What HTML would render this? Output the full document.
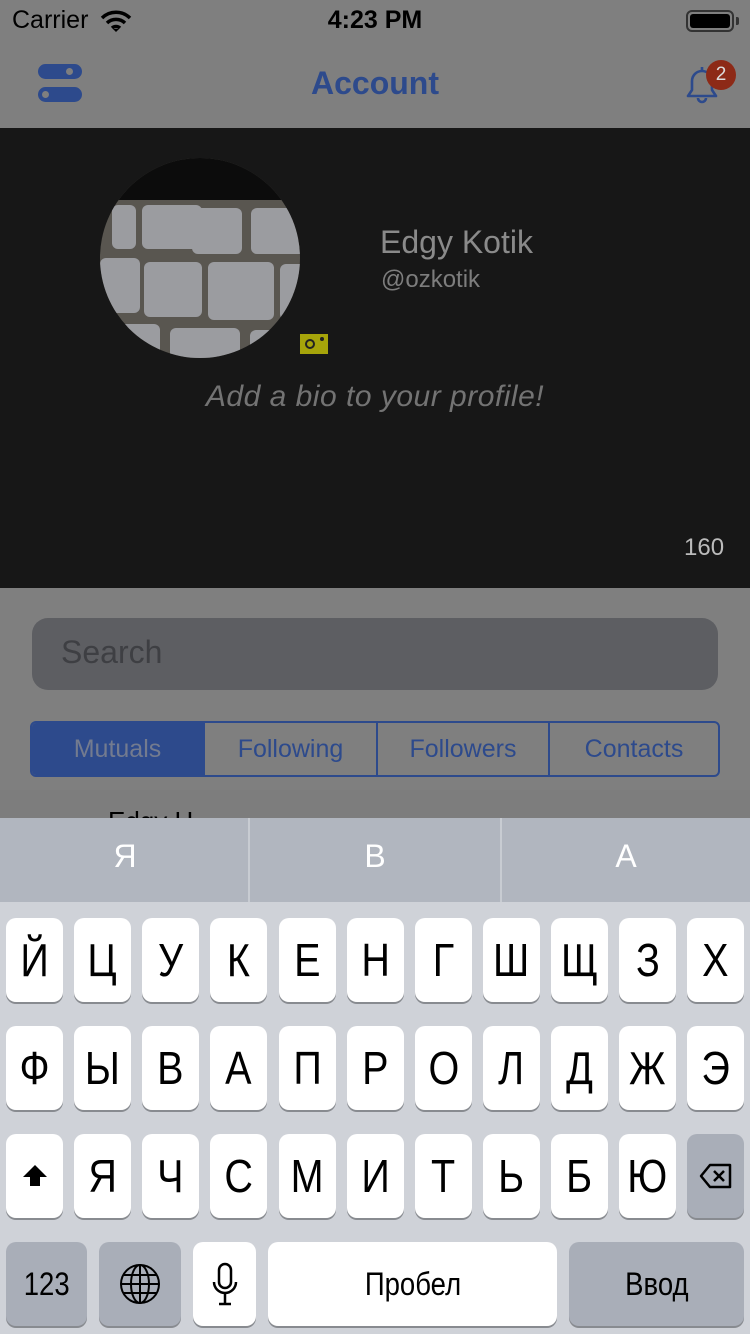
<!DOCTYPE html>
<html><head><meta charset="utf-8"><style>
*{margin:0;padding:0;box-sizing:border-box}
body{width:750px;height:1334px;overflow:hidden;background:#7f7f7f;font-family:"Liberation Sans","DejaVu Sans",sans-serif;position:relative}
.a{position:absolute}
.k{position:absolute;width:57px;height:84px;background:#fff;border-radius:10px;box-shadow:0 2px 0 #888b90;font-size:46px;color:#000;display:flex;align-items:center;justify-content:center}
.k span{display:inline-block;transform:scaleX(0.86)}
.g{background:#a9aeb8}
</style></head><body>
<div class="a" style="left:12px;top:6px;font-size:25px;color:#000">Carrier</div>
<svg class="a" style="left:100px;top:9px" width="32" height="24" viewBox="0 0 32 24"><path d="M2 9a20 20 0 0 1 28 0M7 14a13 13 0 0 1 18 0M12 19a6 6 0 0 1 8 0" stroke="#000" stroke-width="3.5" fill="none"/><path d="M13 20l3 3 3-3z" fill="#000"/></svg>
<div class="a" style="left:0;width:750px;top:6px;text-align:center;font-size:25px;font-weight:bold;color:#000">4:23 PM</div>
<div class="a" style="left:686px;top:10px;width:48px;height:22px;border:2px solid #333;border-radius:6px;padding:2px"><div style="background:#000;width:100%;height:100%;border-radius:3px"></div></div>
<div class="a" style="left:736px;top:17px;width:3px;height:8px;background:#333;border-radius:0 2px 2px 0"></div>
<div class="a" style="left:38px;top:64px;width:44px;height:15px;background:#2d4a8c;border-radius:8px"></div>
<div class="a" style="left:38px;top:87px;width:44px;height:15px;background:#2d4a8c;border-radius:8px"></div>
<div class="a" style="left:66px;top:68px;width:7px;height:7px;background:#7f7f7f;border-radius:50%"></div>
<div class="a" style="left:42px;top:91px;width:7px;height:7px;background:#7f7f7f;border-radius:50%"></div>
<div class="a" style="left:0;width:750px;top:65px;text-align:center;font-size:32px;font-weight:bold;color:#2d4a8c">Account</div>
<svg class="a" style="left:682px;top:62px" width="40" height="44" viewBox="0 0 40 44"><path d="M6 34h28l-4-6V19a10 10 0 0 0-20 0v9z M16 36a4 4 0 0 0 8 0" stroke="#2d4a8c" stroke-width="2.6" fill="none" stroke-linejoin="round"/><path d="M20 5v4" stroke="#2d4a8c" stroke-width="2.6"/></svg>
<div class="a" style="left:706px;top:60px;width:30px;height:30px;border-radius:50%;background:#8d2a17;color:#ddd;font-size:19px;text-align:center;line-height:30px">2</div>
<div class="a" style="left:0;top:128px;width:750px;height:460px;background:#171717"></div>
<div class="a" style="left:100px;top:158px;width:200px;height:200px;border-radius:50%;overflow:hidden;background:#595650">
<div class="a" style="left:0;top:0;width:200px;height:42px;background:#0c0c0c"></div>
<div class="a" style="left:12px;top:47px;width:24px;height:44px;background:#9b9ca0;border-radius:6px"></div>
<div class="a" style="left:42px;top:47px;width:60px;height:44px;background:#9b9ca0;border-radius:6px"></div>
<div class="a" style="left:92px;top:50px;width:50px;height:46px;background:#9b9ca0;border-radius:6px"></div>
<div class="a" style="left:151px;top:50px;width:55px;height:46px;background:#9b9ca0;border-radius:6px"></div>
<div class="a" style="left:0;top:100px;width:40px;height:55px;background:#9b9ca0;border-radius:6px"></div>
<div class="a" style="left:44px;top:104px;width:58px;height:55px;background:#9b9ca0;border-radius:6px"></div>
<div class="a" style="left:108px;top:104px;width:66px;height:58px;background:#9b9ca0;border-radius:6px"></div>
<div class="a" style="left:180px;top:106px;width:30px;height:56px;background:#9b9ca0;border-radius:6px"></div>
<div class="a" style="left:0;top:166px;width:60px;height:40px;background:#9b9ca0;border-radius:6px"></div>
<div class="a" style="left:70px;top:170px;width:70px;height:40px;background:#9b9ca0;border-radius:6px"></div>
<div class="a" style="left:150px;top:172px;width:50px;height:40px;background:#9b9ca0;border-radius:6px"></div>
</div>
<div class="a" style="left:300px;top:334px;width:28px;height:20px;background:#a6a40a"></div>
<div class="a" style="left:305px;top:339px;width:10px;height:10px;border:2px solid #222;border-radius:50%"></div>
<div class="a" style="left:320px;top:337px;width:4px;height:4px;background:#222;border-radius:50%"></div>
<div class="a" style="left:380px;top:224px;font-size:32px;color:#8a8a8a">Edgy Kotik</div>
<div class="a" style="left:381px;top:266px;font-size:24px;color:#7d7d7d">@ozkotik</div>
<div class="a" style="left:0;width:750px;top:380px;text-align:center;font-size:30px;font-style:italic;color:#737373;letter-spacing:0.5px">Add a bio to your profile!</div>
<div class="a" style="left:684px;top:534px;font-size:24px;color:#bbb">160</div>
<div class="a" style="left:32px;top:618px;width:686px;height:72px;background:#5d5e62;border-radius:16px"></div>
<div class="a" style="left:61px;top:634px;font-size:32px;color:#3e3f43">Search</div>
<div class="a" style="left:30px;top:721px;width:690px;height:56px;border:2px solid #2d4a8c;border-radius:6px;display:flex;overflow:hidden">
<div style="width:171px;background:#2d4a8c;color:#737b8f;font-size:25px;text-align:center;line-height:52px">Mutuals</div>
<div style="width:173px;border-left:2px solid #2d4a8c;color:#2d4a8c;font-size:25px;text-align:center;line-height:52px">Following</div>
<div style="width:172px;border-left:2px solid #2d4a8c;color:#2d4a8c;font-size:25px;text-align:center;line-height:52px">Followers</div>
<div style="flex:1;border-left:2px solid #2d4a8c;color:#2d4a8c;font-size:25px;text-align:center;line-height:52px">Contacts</div>
</div>
<div class="a" style="left:0;top:790px;width:750px;height:30px;background:#7d7d7d"></div>
<div class="a" style="left:108px;top:806px;font-size:26px;color:#000">Edgy H</div>
<div class="a" style="left:0;top:818px;width:750px;height:516px;background:#cfd2d8"></div>
<div class="a" style="left:0;top:818px;width:750px;height:84px;background:#b1b6bf"></div>
<div class="a" style="left:248px;top:818px;width:2px;height:84px;background:#c8ccd2"></div>
<div class="a" style="left:500px;top:818px;width:2px;height:84px;background:#c8ccd2"></div>
<div class="a" style="left:0;width:250px;top:838px;text-align:center;font-size:32px;color:#fff">Я</div>
<div class="a" style="left:250px;width:250px;top:838px;text-align:center;font-size:32px;color:#fff">В</div>
<div class="a" style="left:502px;width:248px;top:838px;text-align:center;font-size:32px;color:#fff">А</div>

<div class="k" style="left:6px;top:918px"><span>Й</span></div><div class="k" style="left:74px;top:918px"><span>Ц</span></div><div class="k" style="left:142px;top:918px"><span>У</span></div><div class="k" style="left:210px;top:918px"><span>К</span></div><div class="k" style="left:279px;top:918px"><span>Е</span></div><div class="k" style="left:347px;top:918px"><span>Н</span></div><div class="k" style="left:415px;top:918px"><span>Г</span></div><div class="k" style="left:483px;top:918px"><span>Ш</span></div><div class="k" style="left:551px;top:918px"><span>Щ</span></div><div class="k" style="left:619px;top:918px"><span>З</span></div><div class="k" style="left:687px;top:918px"><span>Х</span></div>
<div class="k" style="left:6px;top:1026px"><span>Ф</span></div><div class="k" style="left:74px;top:1026px"><span>Ы</span></div><div class="k" style="left:142px;top:1026px"><span>В</span></div><div class="k" style="left:210px;top:1026px"><span>А</span></div><div class="k" style="left:279px;top:1026px"><span>П</span></div><div class="k" style="left:347px;top:1026px"><span>Р</span></div><div class="k" style="left:415px;top:1026px"><span>О</span></div><div class="k" style="left:483px;top:1026px"><span>Л</span></div><div class="k" style="left:551px;top:1026px"><span>Д</span></div><div class="k" style="left:619px;top:1026px"><span>Ж</span></div><div class="k" style="left:687px;top:1026px"><span>Э</span></div>
<div class="k" style="left:6px;top:1134px"><svg width="28" height="28" viewBox="0 0 28 28"><path d="M14 3L2 15h7v9h10v-9h7z" fill="#000"/></svg></div>
<div class="k" style="left:74px;top:1134px"><span>Я</span></div><div class="k" style="left:142px;top:1134px"><span>Ч</span></div><div class="k" style="left:210px;top:1134px"><span>С</span></div><div class="k" style="left:279px;top:1134px"><span>М</span></div><div class="k" style="left:347px;top:1134px"><span>И</span></div><div class="k" style="left:415px;top:1134px"><span>Т</span></div><div class="k" style="left:483px;top:1134px"><span>Ь</span></div><div class="k" style="left:551px;top:1134px"><span>Б</span></div><div class="k" style="left:619px;top:1134px"><span>Ю</span></div>
<div class="k g" style="left:687px;top:1134px"><svg width="34" height="26" viewBox="0 0 34 26"><path d="M11 2h20v22H11L2 13z" stroke="#000" stroke-width="2.5" fill="none" stroke-linejoin="round"/><path d="M15 8l10 10M25 8L15 18" stroke="#000" stroke-width="2.5"/></svg></div>
<div class="k g" style="left:6px;top:1242px;width:81px;font-size:32px"><span>123</span></div>
<div class="k g" style="left:99px;top:1242px;width:82px"><svg width="42" height="42" viewBox="0 0 42 42" fill="none" stroke="#000" stroke-width="2"><circle cx="21" cy="21" r="19"/><ellipse cx="21" cy="21" rx="9" ry="19"/><path d="M21 2v38M2 21h38M5 12h32M5 30h32"/></svg></div>
<div class="k" style="left:193px;top:1242px;width:63px"><svg width="26" height="44" viewBox="0 0 26 44" fill="none" stroke="#000" stroke-width="2.5"><rect x="7" y="2" width="12" height="24" rx="6"/><path d="M2 20a11 11 0 0 0 22 0M13 31v10M7 42h12"/></svg></div>
<div class="k" style="left:268px;top:1242px;width:289px;font-size:32px"><span>Пробел</span></div>
<div class="k g" style="left:569px;top:1242px;width:175px;font-size:32px"><span>Ввод</span></div>
</body></html>
